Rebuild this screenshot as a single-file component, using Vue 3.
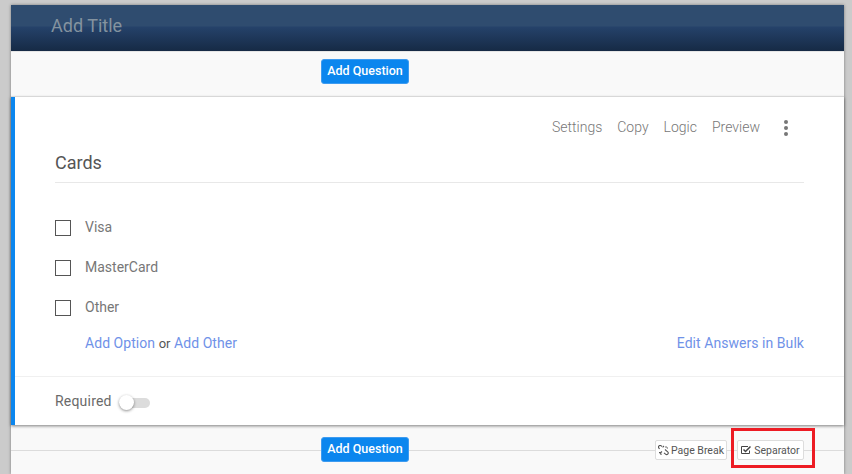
<script setup>
const options = ['Visa', 'MasterCard', 'Other']
const actions = ['Settings', 'Copy', 'Logic', 'Preview']
</script>

<template>
  <div class="page">
    <main class="sheet">
      <header class="title-bar">Add Title</header>
      <div class="add-row top">
        <button class="add-btn">Add Question</button>
      </div>
      <section class="card">
        <nav class="actions">
          <span v-for="a in actions" :key="a">{{ a }}</span>
          <i class="dots"><b></b><b></b><b></b></i>
        </nav>
        <h2 class="question">Cards</h2>
        <ul class="options">
          <li v-for="o in options" :key="o"><span class="box"></span>{{ o }}</li>
        </ul>
        <div class="links">
          <div><a>Add Option</a> <em>or</em> <a>Add Other</a></div>
          <a>Edit Answers in Bulk</a>
        </div>
        <footer class="required">
          <span>Required</span>
          <span class="toggle"><span class="knob"></span></span>
        </footer>
      </section>
      <div class="add-row bottom">
        <button class="add-btn">Add Question</button>
        <div class="tools">
          <button class="tool">
            <svg width="11" height="11" viewBox="0 0 11 11" fill="none" stroke="#555" stroke-width="1.100"><path d="M1.500 4 1 3.200a1.600 1.600 0 0 1 2.300-2.300L4 1.500M4.600 2.300 6 1M7 4.500l2.700 2.300a1.500 1.500 0 0 1-2.200 2.300L6 7.800M4 6.500 1.700 8.500M8 1.200v1.500M10 3H8.800M1 7.500h1.200M3 8.500V10"/></svg>
            <span>Page Break</span>
          </button>
          <button class="tool sep">
            <svg width="10" height="10" viewBox="0 0 10 10" fill="none" stroke="#444"><path d="M8.500 5.500v3h-8v-7h6.500" stroke-width="1"/><path d="M2.500 4.500 4.500 6.500 9.500 1.500" stroke-width="1.500"/></svg>
            <span>Separator</span>
          </button>
          <span class="mark"></span>
        </div>
      </div>
    </main>
  </div>
</template>

<style>
html, body { margin: 0; background: #cbcbcb; overflow: hidden; }
</style>

<style scoped>
.page {
  height: 474px;
  box-sizing: border-box;
  padding: 5px 8px 0 11px;
  font-family: Roboto, "Open Sans", sans-serif;
  overflow: hidden;
}
.sheet {
  position: relative;
  height: 469px;
  background: #f9f9f9;
  box-shadow: 0 0 3px rgba(0, 0, 0, .4);
}
.title-bar {
  height: 46px;
  box-sizing: border-box;
  padding: 9px 40px 0;
  font-size: 18px;
  line-height: 23px;
  color: #84939f;
  background: linear-gradient(#2f4c6f 0, #2f4c6f 21px, #25426a 22px, #162a45 100%);
}
.add-row {
  display: flex;
  justify-content: center;
  position: relative;
}
.add-row.top {
  height: 46px;
  box-sizing: border-box;
  padding-top: 7px;
  border-top: 1px solid #e6e6e6;
  border-bottom: 1px solid #d8d8d8;
}
.add-row.bottom {
  height: 48px;
  box-sizing: border-box;
  padding-top: 12px;
}
.add-row.bottom::before {
  content: "";
  position: absolute;
  left: 0;
  right: 0;
  top: 25px;
  border-top: 1px solid #dcdcdc;
}
.add-btn {
  position: relative;
  width: 88px;
  height: 25px;
  margin-right: 125px;
  padding: 0 0 2px;
  border: 1px solid #3d9bf0;
  border-radius: 3px;
  background: #0b86ee;
  color: #fff;
  font: 500 12.500px/21px Roboto, sans-serif;
}
.card {
  height: 328px;
  box-sizing: border-box;
  background: #fff;
  border-left: 4px solid #0b86ee;
  box-shadow: 0 1px 3px rgba(0, 0, 0, .5);
}
.actions {
  display: flex;
  justify-content: flex-end;
  align-items: center;
  gap: 15px;
  height: 59px;
  box-sizing: border-box;
  padding: 0 56px 0 0;
  font-size: 14px;
  font-weight: 300;
  color: #777;
}
.dots {
  display: flex;
  flex-direction: column;
  gap: 2px;
  margin: 2px 0 0 9px;
}
.dots b {
  width: 4px;
  height: 4px;
  border-radius: 50%;
  background: #777;
}
.question {
  margin: -6px 40px 0 40px;
  height: 32px;
  border-bottom: 1px solid #e8e8e8;
  font-size: 18px;
  line-height: 26px;
  font-weight: 400;
  color: #555;
}
.options {
  list-style: none;
  margin: 24px 0 0 40px;
  padding: 0;
}
.options li {
  display: flex;
  align-items: center;
  height: 40px;
  gap: 14px;
  font-size: 14px;
  line-height: 38px;
  color: #777;
}
.box {
  width: 14px;
  height: 14px;
  margin-top: 1px;
  border: 1px solid #555;
}
.links {
  display: flex;
  justify-content: space-between;
  height: 49px;
  box-sizing: border-box;
  margin: 0 40px 0 70px;
  padding-top: 8px;
  font-size: 14px;
  letter-spacing: .05px;
  line-height: 16px;
  color: #6f92e8;
}
.links em {
  font-style: normal;
  font-size: 13px;
  color: #555;
}
.required {
  display: flex;
  align-items: center;
  gap: 7px;
  height: 49px;
  box-sizing: border-box;
  padding-left: 40px;
  border-top: 1px solid #f0f0f0;
  font-size: 14px;
  letter-spacing: .2px;
  color: #6a6a6a;
}
.toggle {
  position: relative;
  width: 31px;
  height: 10px;
  margin-top: 3px;
  border-radius: 5px;
  background: #dcdcdc;
}
.knob {
  position: absolute;
  left: 0;
  top: -3px;
  width: 15px;
  height: 15px;
  border-radius: 50%;
  background: #fff;
  box-shadow: 0 1px 3px rgba(0, 0, 0, .45);
}
.tools {
  position: absolute;
  right: 40px;
  top: 15px;
  display: flex;
  gap: 10px;
}
.tool {
  display: flex;
  align-items: center;
  justify-content: center;
  gap: 2px;
  height: 20px;
  width: 72px;
  padding: 0;
  border: 1px solid #ddd;
  border-radius: 2px;
  background: #fff;
  color: #555;
  font: 10.500px Roboto, sans-serif;
  white-space: nowrap;
}
.tool.sep {
  width: 67px;
  gap: 3px;
}
.mark {
  position: absolute;
  right: -11px;
  top: -12px;
  width: 84px;
  height: 40px;
  box-sizing: border-box;
  border: 3px solid #ed1c24;
  pointer-events: none;
}
</style>
